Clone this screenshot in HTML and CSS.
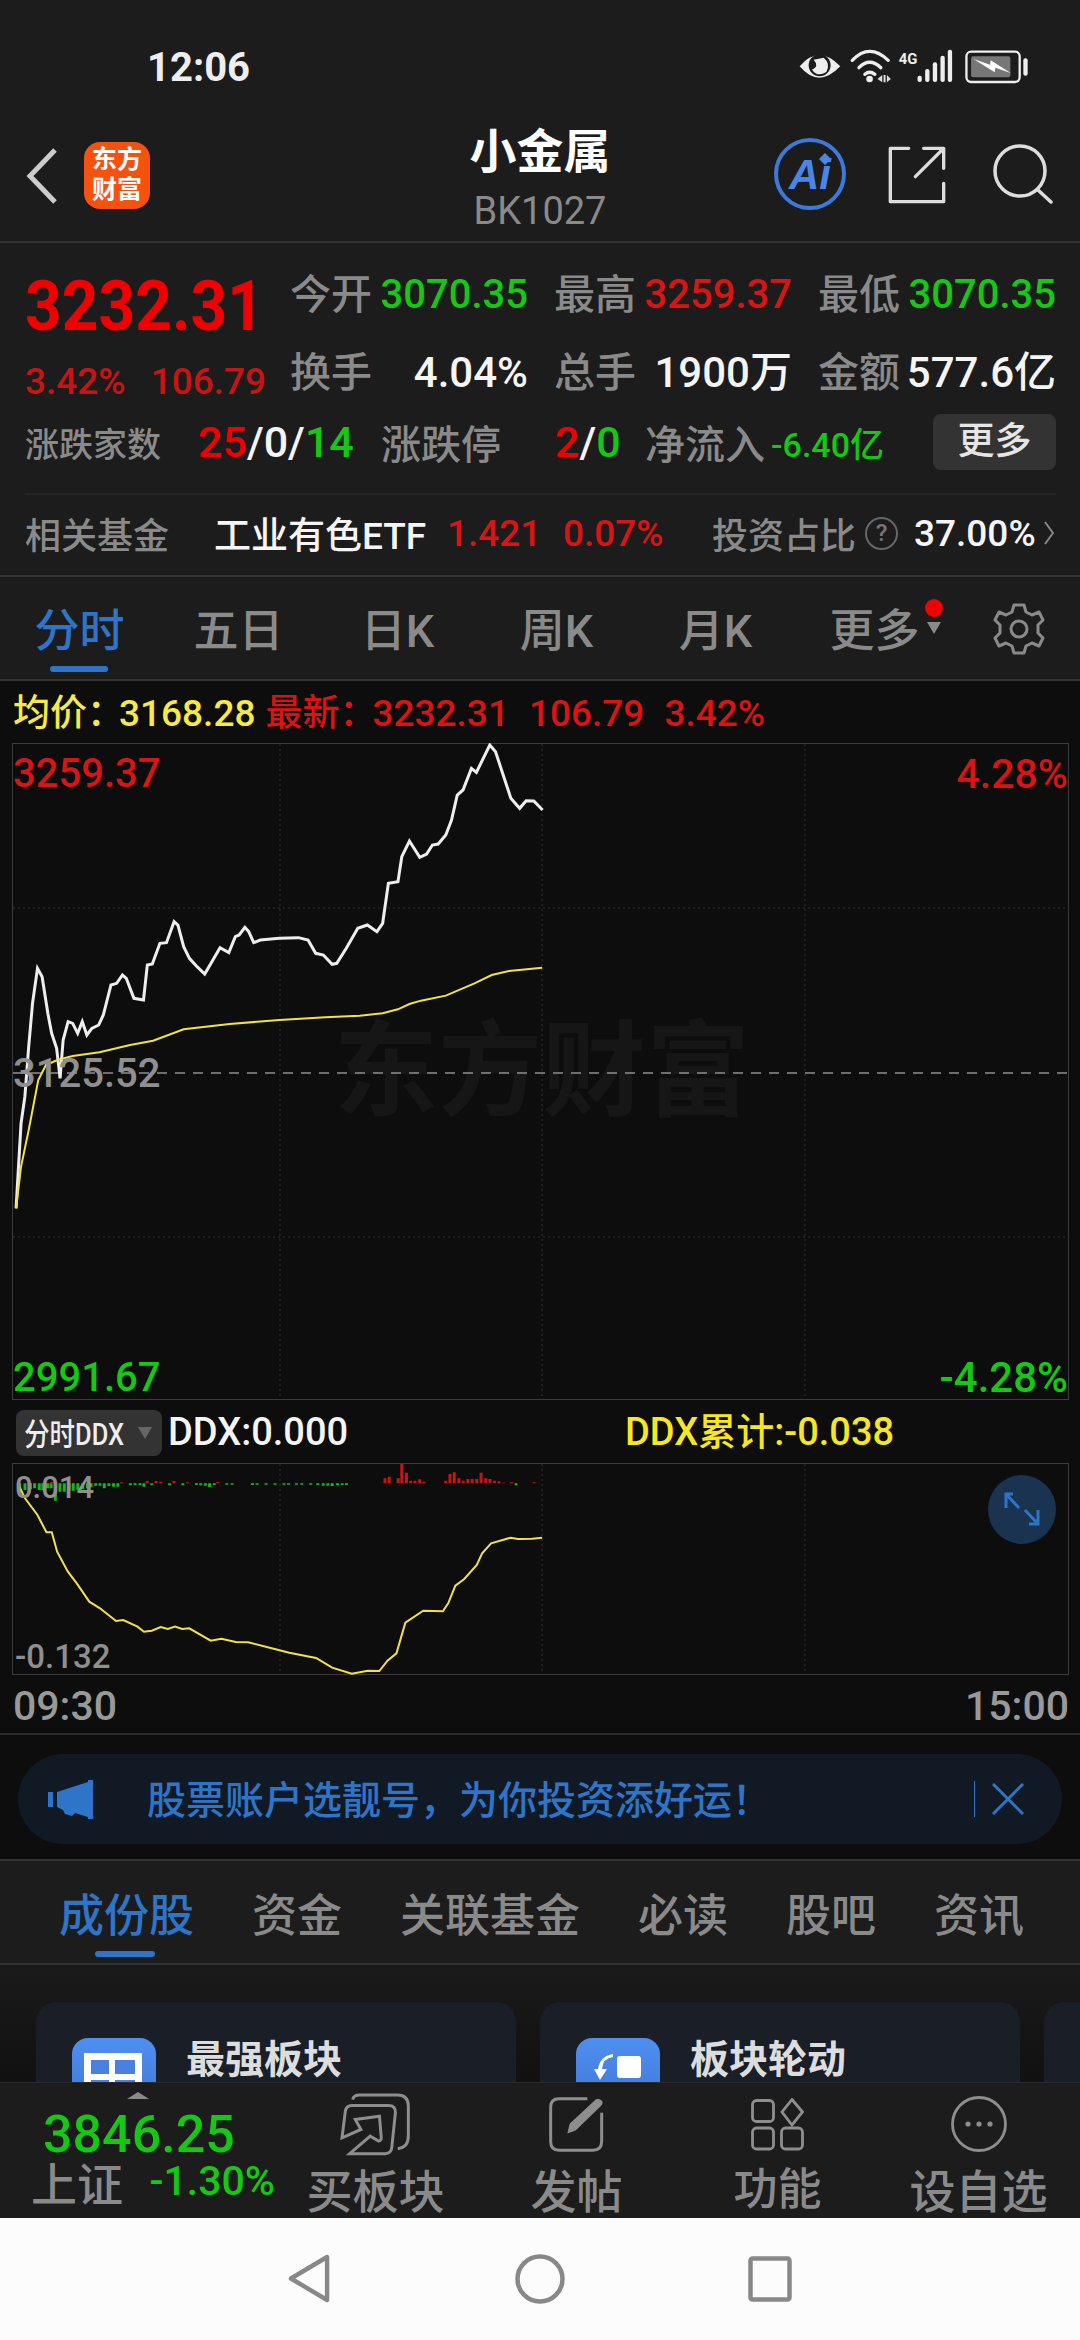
FILE: index.html
```html
<!DOCTYPE html>
<html lang="zh-CN">
<head>
<meta charset="UTF-8">
<meta name="viewport" content="width=device-width, initial-scale=1.0">
<title>小金属</title>
<link rel="stylesheet" href="styles.css">
</head>
<body>

<div class="status-bar">
    <span class="clock">12:06</span>
    <svg class="status-icons" viewBox="110 50 700 120">
        <path d="M118 108 Q175 40 240 108 Q175 176 118 108 Z" fill="#eee"/>
        <circle cx="178" cy="105" r="33" fill="#1c1c1c"/>
        <path d="M160 88 Q178 108 155 118 Q172 142 198 125 Q212 100 190 82 Z" fill="#eee"/>
        <path d="M276 90 Q328 36 384 90 M296 112 Q328 80 362 112 M314 132 Q328 120 344 132" fill="none" stroke="#eee" stroke-width="10" stroke-linecap="round"/>
        <circle cx="328" cy="146" r="10" fill="#eee"/>
        <path d="M352 146 L366 134 V156 Z M380 134 L392 146 L380 156 Z M370 134 H376 V156 H370 Z" fill="#ddd"/>
        <text x="416" y="100" font-size="46" font-weight="700" fill="#eee" textLength="56" lengthAdjust="spacingAndGlyphs">4G</text>
        <rect x="472" y="136" width="13" height="19" rx="6" fill="#eee"/>
        <rect x="495" y="116" width="13" height="39" rx="6" fill="#eee"/>
        <rect x="518" y="96" width="13" height="59" rx="6" fill="#eee"/>
        <rect x="541" y="76" width="13" height="79" rx="6" fill="#eee"/>
        <rect x="563" y="58" width="13" height="97" rx="6" fill="#eee"/>
        <rect x="619" y="64" width="160" height="91" rx="14" fill="none" stroke="#eee" stroke-width="7"/>
        <rect x="633" y="78" width="118" height="63" rx="6" fill="#777"/>
        <path d="M640 86 L690 103 L692 90 L752 128 L706 112 L704 126 Z" fill="#fff"/>
        <rect x="790" y="84" width="13" height="52" rx="6" fill="#eee"/>
    </svg>
</div>

<div class="header">
    <div class="header-left">
        <svg class="back-icon" viewBox="0 0 32 56"><path d="M29 2 L4 28 L29 54" fill="none" stroke="#ccc" stroke-width="5"/></svg>
        <div class="logo">东方<br>财富</div>
    </div>
    <div class="title-box">
        <div class="title">小金属</div>
        <div class="code">BK1027</div>
    </div>
    <div class="header-right">
        <div class="ai-btn">Ai<svg class="ai-star" viewBox="0 0 12 12"><path d="M6 0 L12 6 L6 12 L0 6 Z" fill="#4a86e8"/></svg></div>
        <svg class="share-icon" viewBox="380 345 180 180"><path d="M445 355 H390 V515 H550 V460 M465 440 L548 357 M490 355 H550 V415" fill="none" stroke="#ddd" stroke-width="10" stroke-linejoin="round" stroke-linecap="round"/></svg>
        <svg class="search-icon" viewBox="0 0 60 60"><circle cx="27" cy="27" r="25" fill="none" stroke="#ddd" stroke-width="3.5"/><path d="M45 46 L58 58" stroke="#ddd" stroke-width="3.5" stroke-linecap="round"/></svg>
    </div>
</div>

<div class="quote">
    <div class="quote-top">
        <div class="price-col">
            <div class="price">3232.31</div>
            <div class="change"><span>3.42%</span><span>106.79</span></div>
        </div>
        <div class="stats">
            <div class="stat"><span class="label">今开</span><span class="green">3070.35</span></div>
            <div class="stat"><span class="label">最高</span><span class="red">3259.37</span></div>
            <div class="stat"><span class="label">最低</span><span class="green">3070.35</span></div>
            <div class="stat"><span class="label">换手</span><span class="white big">4.04%</span></div>
            <div class="stat"><span class="label">总手</span><span class="white big">1900万</span></div>
            <div class="stat"><span class="label">金额</span><span class="white big">577.6亿</span></div>
        </div>
    </div>
    <div class="quote-row3">
        <span class="label small w-rise">涨跌家数</span>
        <span class="w-count"><span class="bright-red">25</span><span class="white">/0/</span><span class="green">14</span></span>
        <span class="label w-limit">涨跌停</span>
        <span class="w-limit-val"><span class="bright-red">2</span><span class="white">/</span><span class="green">0</span></span>
        <span class="label w-flow">净流入</span>
        <span class="green flow-val">-6.40亿</span>
        <span class="more-btn">更多</span>
    </div>
    <div class="quote-row4">
        <span class="label w-fund">相关基金</span>
        <span class="white w-etf">工业有色ETF</span>
        <span class="red w-nav">1.421</span>
        <span class="red w-pct">0.07%</span>
        <span class="label w-ratio">投资占比</span>
        <span class="help">?</span>
        <span class="white">37.00%</span>
        <svg class="row-arrow" viewBox="0 0 10 24"><path d="M1 1 L9 12 L1 23" fill="none" stroke="#888" stroke-width="2"/></svg>
    </div>
</div>

<div class="period-tabs">
    <div class="period active">分时<i class="period-line"></i></div>
    <div class="period">五日</div>
    <div class="period">日K</div>
    <div class="period">周K</div>
    <div class="period">月K</div>
    <div class="period">更多<i class="red-dot"></i><i class="more-arrow"></i></div>
    <svg class="gear" viewBox="0 0 52 52">
        <path d="M21 2 H31 L33 9 L39 12 L46 9 L50 17 L45 22 V30 L50 35 L46 43 L39 40 L33 43 L31 50 H21 L19 43 L13 40 L6 43 L2 35 L7 30 V22 L2 17 L6 9 L13 12 L19 9 Z" fill="none" stroke="#8a8a8a" stroke-width="3" stroke-linejoin="round"/>
        <circle cx="26" cy="26" r="8" fill="none" stroke="#8a8a8a" stroke-width="3"/>
    </svg>
</div>

<div class="dark-area">
    <div class="info-row">
        <span class="yellow">均价：</span><span class="yellow v-avg">3168.28</span>
        <span class="info-red">最新：</span><span class="info-red v-new">3232.31</span>
        <span class="info-red v-diff">106.79</span><span class="info-red v-pct">3.42%</span>
    </div>

    <div class="chart">
        <div class="watermark">东方财富</div>
        <svg class="chart-svg" viewBox="0 743 1080 657">
            <rect x="12.5" y="743.5" width="1056" height="656" fill="none" stroke="#3c3c3c"/>
            <path d="M280 744 V1400 M542 744 V1400 M805 744 V1400 M13 908 H1068 M13 1237 H1068" stroke="#333" stroke-dasharray="2 3"/>
            <path d="M13 1073 H1068" stroke="#8f8f8f" stroke-width="1.5" stroke-dasharray="10 8"/>
            <g transform="translate(0,720) scale(.38265,.33333)">
                <polyline class="line-white" points="42,1465 55,1210 65,1130 75,980 85,850 98,745 110,770 125,880 135,940 148,985 157,1075 165,960 178,905 190,910 203,940 215,905 227,945 240,925 258,915 270,885 290,795 305,790 320,765 330,775 350,835 375,840 385,735 398,732 418,670 435,668 455,605 465,615 480,680 495,715 515,740 535,762 575,683 598,698 615,650 625,645 640,622 650,635 663,668 680,660 730,655 780,653 805,660 825,700 845,705 868,733 880,730 905,685 935,625 960,615 985,635 1000,610 1015,490 1040,485 1050,410 1070,363 1097,412 1115,402 1130,375 1145,372 1165,345 1180,300 1195,225 1210,210 1232,145 1245,157 1280,75 1295,95 1315,165 1335,235 1358,265 1375,242 1395,243 1418,270"/>
                <polyline class="line-yellow" points="42,1465 55,1340 75,1230 100,1080 120,1035 150,1020 190,1008 260,997 340,975 400,962 480,928 600,912 730,900 850,892 940,887 1000,880 1040,868 1070,852 1100,842 1165,827 1240,790 1285,765 1330,753 1417,743"/>
            </g>
        </svg>
        <span class="chart-label top-left red">3259.37</span>
        <span class="chart-label top-right red">4.28%</span>
        <span class="chart-label mid-left">3125.52</span>
        <span class="chart-label bottom-left green">2991.67</span>
        <span class="chart-label bottom-right green">-4.28%</span>
    </div>

    <div class="ddx-row">
        <div class="ddx-chip"><span class="ddx-chip-text">分时DDX</span><i class="chip-arrow"></i></div>
        <span class="white ddx-val">DDX:0.000</span>
        <span class="ddx-total">DDX累计:-0.038</span>
    </div>

    <div class="sub-chart">
        <svg class="sub-svg" viewBox="0 1463 1080 212">
            <rect x="12.5" y="1463.5" width="1056" height="211" fill="none" stroke="#3c3c3c"/>
            <path d="M280 1464 V1674 M542 1464 V1674 M805 1464 V1674" stroke="#333" stroke-dasharray="2 3"/>
            <g transform="translate(0,1440) scale(.35714,.33333)">
                <path class="bars-green" d="M55 130V160M70 130V150M85 130V148M97 130V145M110 130V150M120 130V150M133 130V145M143 130V145M155 130V182M168 130V155M180 130V155M193 130V152M205 130V152M218 130V150M232 130V148M245 130V145M255 130V142M268 130V137M280 130V137M292 130V145M305 130V138M318 130V140M330 130V140M365 130V136M378 130V135M392 130V136M403 130V140M425 130V135M475 130V136M512 130V136M550 130V135M562 130V136M575 130V137M587 130V141M600 130V135M635 130V134M650 130V134M707 130V135M720 130V134M745 130V134M770 130V134M795 130V134M808 130V134M830 130V134M845 130V134M870 130V134M890 130V135M905 130V137M918 130V137M930 130V138M945 130V136M958 130V135M970 130V135M1445 130V136"/>
                <path class="bars-red" d="M145 130V126M340 130V127M412 130V123M437 130V123M450 130V125M487 130V123M525 130V127M610 130V126M1078 130V115M1090 130V110M1115 130V115M1125 130V72M1138 130V98M1150 130V122M1162 130V122M1175 130V118M1187 130V125M1248 130V122M1260 130V102M1272 130V97M1285 130V115M1297 130V122M1310 130V117M1322 130V117M1335 130V117M1347 130V98M1360 130V115M1372 130V117M1385 130V122M1397 130V124M1410 130V128M1432 130V127M1495 130V127"/>
                <polyline class="line-ddx" points="50,130 70,175 105,225 130,277 145,277 160,335 190,395 215,430 250,485 280,505 325,543 345,540 385,560 403,575 425,572 450,561 470,567 490,560 510,567 530,565 590,602 620,596 660,606 695,607 780,630 810,638 885,654 930,683 985,701 1030,692 1062,693 1085,662 1110,640 1135,548 1185,512 1240,514 1255,490 1275,437 1300,417 1335,375 1350,340 1375,310 1430,293 1450,297 1490,296 1518,293"/>
            </g>
        </svg>
        <span class="sub-label sub-top">0.014</span>
        <span class="sub-label sub-bottom">-0.132</span>
        <div class="expand-btn">
            <svg viewBox="0 0 36 36"><path d="M2 17 V3 H9 M2 3 L15 17 M34 19 V33 H25 M34 33 L21 19" fill="none" stroke="#2e74c8" stroke-width="3"/></svg>
        </div>
    </div>

    <div class="time-row"><span>09:30</span><span>15:00</span></div>

    <div class="banner-wrap">
        <div class="banner">
            <svg class="horn" viewBox="48 1779 45 39"><path d="M48 1791 H53 V1806 H48 Z M57 1791 L88 1781 V1779 H93 V1818 H88 V1816 L75 1812 L72 1815 L65 1813 L63 1809 L57 1806 Z" fill="#2e74c8"/></svg>
            <span class="banner-text">股票账户选靓号，为你投资添好运！</span>
            <i class="banner-sep"></i>
            <svg class="banner-close" viewBox="0 0 32 32"><path d="M1 1 L31 31 M31 1 L1 31" stroke="#2e74c8" stroke-width="3"/></svg>
        </div>
    </div>
</div>

<div class="content-tabs">
    <div class="content-tab active">成份股<i class="content-line"></i></div>
    <div class="content-tab">资金</div>
    <div class="content-tab">关联基金</div>
    <div class="content-tab">必读</div>
    <div class="content-tab">股吧</div>
    <div class="content-tab">资讯</div>
</div>

<div class="cards">
    <div class="card">
        <div class="card-icon">
            <svg viewBox="0 0 84 60"><path d="M12 15 H70 V60 H12 Z" fill="#fff"/><path d="M19 22 H37 V36 H19 Z M43 22 H63 V36 H43 Z M19 42 H37 V60 H19 Z M43 42 H63 V60 H43 Z" fill="#4a80e0"/></svg>
        </div>
        <div class="card-title">最强板块</div>
    </div>
    <div class="card">
        <div class="card-icon">
            <svg viewBox="0 0 84 60"><rect x="41" y="18" width="24" height="22" rx="3" fill="#fff"/><path d="M37 19 Q27 20 26 31 H31 L24 42 L18 31 H22 Q24 18 37 16 Z" fill="#fff"/></svg>
        </div>
        <div class="card-title">板块轮动</div>
    </div>
    <div class="card"></div>
</div>

<div class="bottom-bar">
    <div class="index-box">
        <i class="index-arrow"></i>
        <div class="index-val">3846.25</div>
        <div class="index-row"><span class="index-name">上证</span><span class="index-pct">-1.30%</span></div>
    </div>
    <div class="bar-item">
        <div class="bar-icon">
            <svg class="ic-buy" viewBox="60 20 215 190"><path d="M97 40 Q100 26 118 26 H232 Q265 26 265 60 V150 Q265 185 233 188 M65 155 L75 75 Q78 58 95 58 H205 Q228 58 226 80 L215 185 Q213 203 195 203 H88 L150 150 L175 165 Q185 165 183 150 L178 90 L105 100 L122 130 Z" fill="none" stroke="#8e8e8e" stroke-width="9"/></svg>
        </div>
        <div class="bar-text">买板块</div>
    </div>
    <div class="bar-item">
        <div class="bar-icon">
            <svg class="ic-post" viewBox="690 28 165 164"><path d="M805 33 H720 Q695 33 695 58 V160 Q695 187 720 187 H822 Q848 187 848 160 V75" fill="none" stroke="#8e8e8e" stroke-width="9"/><path d="M745 137 L752 108 L830 35 Q840 28 850 40 Q853 48 845 55 L770 128 Z" fill="#8e8e8e"/></svg>
        </div>
        <div class="bar-text">发帖</div>
    </div>
    <div class="bar-item">
        <div class="bar-icon">
            <svg class="ic-func" viewBox="0 0 53 53"><path d="M41 1.5 L51.5 14 L41 27 L31 14 Z" fill="none" stroke="#8e8e8e" stroke-width="2.8"/><rect x="1.5" y="2.5" width="21" height="21" rx="4" fill="none" stroke="#8e8e8e" stroke-width="2.8"/><rect x="1.5" y="30" width="21" height="21" rx="4" fill="none" stroke="#8e8e8e" stroke-width="2.8"/><rect x="30.5" y="30" width="21" height="21" rx="4" fill="none" stroke="#8e8e8e" stroke-width="2.8"/></svg>
        </div>
        <div class="bar-text tight">功能</div>
    </div>
    <div class="bar-item">
        <div class="bar-icon">
            <svg class="ic-opt" viewBox="0 0 56 56"><circle cx="28" cy="28" r="26.5" fill="none" stroke="#8e8e8e" stroke-width="2.8"/><circle cx="17" cy="28" r="2.6" fill="#8e8e8e"/><circle cx="28" cy="28" r="2.6" fill="#8e8e8e"/><circle cx="39" cy="28" r="2.6" fill="#8e8e8e"/></svg>
        </div>
        <div class="bar-text">设自选</div>
    </div>
</div>

<div class="nav-bar">
    <svg class="nav-back" viewBox="0 0 44 50"><path d="M40 3 V47 L3 25 Z" fill="none" stroke="#888" stroke-width="4.5" stroke-linejoin="round"/></svg>
    <svg class="nav-home" viewBox="0 0 50 50"><circle cx="25" cy="25" r="22.5" fill="none" stroke="#888" stroke-width="4.5"/></svg>
    <svg class="nav-recent" viewBox="0 0 44 46"><rect x="2.5" y="2.5" width="39" height="41" rx="2" fill="none" stroke="#888" stroke-width="4.5"/></svg>
</div>

</body>
</html>
```

FILE: styles.css
```css
* {
    box-sizing: border-box;
}

body {
    margin: 0;
    width: 1080px;
    height: 2340px;
    overflow: hidden;
    background-color: #1c1c1c;
    font-family: Roboto, "Noto Sans CJK SC", sans-serif;
    font-weight: 500;
    color: #8a8a8a;
}

i {
    display: block;
}

svg {
    display: block;
}

.red { color: #d81414; }
.bright-red { color: #f00000; }
.green { color: #14c814; }
.white { color: #f5f5f5; }
.yellow { color: #f7ea45; }
.info-red { color: #d81414; }

/* status bar */
.status-bar {
    height: 130px;
    padding: 48px 50px 0 147px;
    display: flex;
    justify-content: space-between;
    align-items: flex-start;
}

.clock {
    font-size: 40px;
    font-weight: 700;
    line-height: 40px;
    color: #eee;
}

.status-icons {
    width: 233px;
    height: 40px;
    margin-top: -1px;
}

/* header */
.header {
    height: 113px;
    display: grid;
    grid-template-columns: 1fr auto 1fr;
    border-bottom: 2px solid #333;
}

.header-left {
    display: flex;
    align-items: flex-start;
    padding: 18px 0 0 26px;
    gap: 26px;
}

.back-icon {
    width: 32px;
    height: 56px;
}

.logo {
    width: 66px;
    height: 67px;
    margin-top: -6px;
    padding-top: 3px;
    border-radius: 16px;
    background-color: #f5520f;
    color: #fff;
    font-size: 25px;
    font-weight: 700;
    line-height: 30px;
    text-align: center;
}

.title-box {
    text-align: center;
}

.title {
    font-size: 47px;
    font-weight: 700;
    line-height: 44px;
    color: #fff;
}

.code {
    margin-top: 19px;
    font-size: 38px;
    font-weight: 400;
    line-height: 36px;
    color: #8a8a8a;
}

.header-right {
    display: flex;
    justify-content: flex-end;
    align-items: flex-start;
    padding: 8px 27px 0 0;
}

.ai-btn {
    position: relative;
    width: 72px;
    height: 72px;
    border: 4px solid #3d79d8;
    border-radius: 50%;
    color: #4a86e8;
    font-family: "Liberation Sans", sans-serif;
    font-size: 42px;
    font-weight: 700;
    font-style: italic;
    line-height: 66px;
    text-align: center;
}

.ai-star {
    position: absolute;
    top: 11px;
    right: 11px;
    width: 12px;
    height: 12px;
}

.share-icon {
    width: 60px;
    height: 60px;
    margin: 7px 0 0 41px;
}

.search-icon {
    width: 60px;
    height: 60px;
    margin: 6px 0 0 46px;
}

/* quote block */
.quote {
    height: 334px;
    padding: 0 24px 0 25px;
    border-bottom: 2px solid #333;
    font-size: 40px;
}

.quote-top {
    display: flex;
}

.price-col {
    width: 265px;
    padding-top: 29px;
}

.price {
    font-size: 64px;
    font-weight: 700;
    line-height: 70px;
    color: #f00000;
    transform: scaleY(1.1);
}

.change {
    display: flex;
    gap: 25px;
    margin-top: 18px;
    font-size: 37px;
    line-height: 44px;
    color: #c81414;
}

.stats {
    display: grid;
    grid-template-columns: repeat(3, 238px);
    column-gap: 26px;
    row-gap: 22px;
    padding-top: 27px;
}

.stat {
    display: flex;
    justify-content: space-between;
    line-height: 50px;
}

.big {
    font-size: 42px;
}

.label {
    color: #8a8a8a;
    font-size: 41px;
}

.label.small {
    font-size: 34px;
}

.quote-row3 {
    display: flex;
    align-items: center;
    height: 56px;
    margin-top: 10px;
    font-size: 43px;
}

.quote-row3 .label:not(.small) {
    font-size: 40px;
}

.w-rise { width: 173px; }
.w-count { width: 183px; }
.w-limit { width: 174px; }
.w-limit-val { width: 90px; }
.w-flow { width: 126px; }

.flow-val {
    font-size: 34px;
}

.more-btn {
    margin-left: auto;
    width: 123px;
    height: 56px;
    border-radius: 8px;
    background-color: #333;
    color: #e6e6e6;
    font-size: 37px;
    line-height: 56px;
    text-align: center;
}

.quote-row4 {
    display: flex;
    align-items: center;
    height: 84px;
    margin-top: 23px;
    padding-bottom: 6px;
    border-top: 2px solid #242424;
    font-size: 37px;
}

.quote-row4 .label {
    font-size: 36px;
}

.w-fund { width: 189px; }
.w-etf { width: 233px; }
.w-nav { width: 116px; }
.w-pct { width: 149px; }
.w-ratio { width: 153px; }

.help {
    width: 33px;
    height: 33px;
    margin-right: 16px;
    border: 2px solid #666;
    border-radius: 50%;
    color: #777;
    font-size: 24px;
    line-height: 29px;
    text-align: center;
}

.row-arrow {
    width: 10px;
    height: 24px;
    margin-left: 8px;
}

/* period tabs */
.period-tabs {
    position: relative;
    height: 104px;
    display: grid;
    grid-template-columns: repeat(6, 159px) 1fr;
    border-bottom: 2px solid #333;
}

.period {
    position: relative;
    padding-top: 28px;
    font-size: 45px;
    line-height: 54px;
    text-align: center;
}

.period.active {
    color: #2e74c8;
}

.period-line {
    position: absolute;
    left: 50px;
    top: 89px;
    width: 58px;
    height: 6px;
    border-radius: 3px;
    background-color: #2e74c8;
}

.red-dot {
    position: absolute;
    top: 22px;
    left: 130px;
    width: 18px;
    height: 18px;
    border-radius: 50%;
    background-color: #f00000;
}

.more-arrow {
    position: absolute;
    top: 45px;
    left: 132px;
    border-left: 7px solid transparent;
    border-right: 7px solid transparent;
    border-top: 12px solid #8a8a8a;
}

.gear {
    width: 52px;
    height: 52px;
    margin: 26px 0 0 39px;
}

/* dark middle part */
.dark-area {
    height: 1180px;
    background-color: #0d0d0d;
}

.info-row {
    display: flex;
    height: 62px;
    padding-left: 13px;
    font-size: 37px;
    line-height: 66px;
}

.v-avg { margin-left: -5px; }
.v-new { margin-left: -4px; }
.v-avg + .info-red { margin-left: 10px; }
.v-diff { margin-left: 20px; }
.v-pct { margin-left: 20px; }

.chart {
    position: relative;
    height: 657px;
}

.chart-svg {
    position: absolute;
    left: 0;
    top: 0;
    width: 1080px;
    height: 657px;
}

.line-white {
    fill: none;
    stroke: #eee;
    stroke-width: 3px;
    vector-effect: non-scaling-stroke;
}

.line-yellow,
.line-ddx {
    fill: none;
    stroke: #f2e24a;
    stroke-width: 2px;
    vector-effect: non-scaling-stroke;
}

.bars-green {
    stroke: #14b814;
    stroke-width: 3px;
    vector-effect: non-scaling-stroke;
}

.bars-red {
    stroke: #c81414;
    stroke-width: 3px;
    vector-effect: non-scaling-stroke;
}

.watermark {
    position: absolute;
    left: 334px;
    top: 280px;
    font-size: 104px;
    font-weight: 700;
    line-height: 100px;
    color: #161616;
}

.chart-label {
    position: absolute;
    font-size: 40px;
    line-height: 44px;
}

.top-left { left: 13px; top: 9px; }
.top-right { right: 12px; top: 9px; font-size: 41px; }
.mid-left { left: 13px; top: 309px; color: #8f8f8f; }
.bottom-left { left: 13px; top: 613px; }
.bottom-right { right: 12px; top: 613px; font-size: 42px; }

.ddx-row {
    display: flex;
    align-items: center;
    height: 63px;
    padding-left: 16px;
    font-size: 38px;
}

.ddx-chip {
    position: relative;
    width: 146px;
    height: 46px;
    margin: 2px 6px 0 0;
    border-radius: 8px;
    background-color: #333;
    color: #eee;
}

.ddx-chip-text {
    display: inline-block;
    font-size: 31px;
    line-height: 46px;
    padding-left: 10px;
    transform: scaleX(.82);
    transform-origin: left center;
    white-space: nowrap;
}

.chip-arrow {
    position: absolute;
    left: 122px;
    top: 17px;
    border-left: 7px solid transparent;
    border-right: 7px solid transparent;
    border-top: 12px solid #666;
}

.ddx-val {
    width: 457px;
    line-height: 60px;
}

.ddx-total {
    font-size: 38px;
    line-height: 60px;
    color: #f6e71f;
}

.sub-chart {
    position: relative;
    height: 212px;
}

.sub-svg {
    position: absolute;
    left: 0;
    top: 0;
    width: 1080px;
    height: 212px;
}

.sub-label {
    position: absolute;
    left: 15px;
    font-size: 33px;
    line-height: 36px;
    color: #8f8f8f;
}

.sub-top { top: 7px; font-size: 31px; }
.sub-bottom { top: 176px; }

.expand-btn {
    position: absolute;
    left: 988px;
    top: 12px;
    width: 68px;
    height: 69px;
    padding: 16px;
    border-radius: 50%;
    background-color: #1a3350;
}

.time-row {
    display: flex;
    justify-content: space-between;
    height: 60px;
    padding: 0 11px 0 13px;
    border-bottom: 2px solid #2a2a2a;
    font-size: 41px;
    line-height: 62px;
    color: #999;
}

.banner-wrap {
    height: 126px;
    padding: 19px 18px 0;
    border-bottom: 2px solid #333;
}

.banner {
    display: flex;
    align-items: center;
    height: 90px;
    padding: 0 38px 0 30px;
    border-radius: 45px;
    background-color: #111a24;
}

.horn {
    width: 45px;
    height: 39px;
}

.banner-text {
    margin: 0 0 5px 54px;
    font-size: 39px;
    color: #2e74c8;
}

.banner-sep {
    width: 1px;
    height: 36px;
    margin-left: auto;
    background-color: #2e74c8;
}

.banner-close {
    width: 32px;
    height: 32px;
    margin-left: 17px;
}

/* content tabs */
.content-tabs {
    height: 104px;
    display: flex;
    gap: 58px;
    padding-left: 59px;
    border-bottom: 2px solid #333;
}

.content-tab {
    position: relative;
    padding-top: 29px;
    font-size: 45px;
    line-height: 54px;
}

.content-tab.active {
    color: #2e74c8;
}

.content-line {
    position: absolute;
    left: 36px;
    top: 90px;
    width: 60px;
    height: 6px;
    border-radius: 3px;
    background-color: #2e74c8;
}

/* cards under the bar */
.cards {
    height: 117px;
    display: flex;
    gap: 24px;
    padding: 37px 0 0 36px;
    overflow: hidden;
    background: linear-gradient(#1a1a1a, #111);
}

.card {
    flex: 0 0 480px;
    height: 200px;
    display: flex;
    gap: 30px;
    padding: 36px;
    border-radius: 20px;
    background-color: #1a1e27;
}

.card-icon {
    width: 84px;
    height: 84px;
    border-radius: 16px;
    background: linear-gradient(#4f8ef0, #3f74d0);
}

.card-title {
    margin-top: 2px;
    font-size: 39px;
    font-weight: 700;
    line-height: 40px;
    color: #ddd;
}

/* bottom bar */
.bottom-bar {
    height: 136px;
    display: flex;
    background-color: #1c1c1c;
    border-top: 1px solid #2a2a2a;
}

.index-box {
    position: relative;
    width: 275px;
    padding-top: 9px;
}

.index-arrow {
    width: 0;
    margin-left: 127px;
    border-left: 11px solid transparent;
    border-right: 11px solid transparent;
    border-bottom: 7px solid #8a8a8a;
}

.index-val {
    margin: 10px 0 0 43px;
    font-size: 52px;
    font-weight: 500;
    line-height: 52px;
    color: #14c814;
}

.index-row {
    display: flex;
    align-items: center;
    height: 40px;
    padding-left: 31px;
}

.index-name {
    width: 124px;
    font-size: 46px;
}

.index-pct {
    font-size: 41px;
    color: #14c814;
}

.bar-item {
    width: 201px;
    padding-top: 9px;
    text-align: center;
}

.bar-icon {
    display: flex;
    justify-content: center;
    align-items: center;
    height: 64px;
}

.ic-buy { width: 72px; height: 63px; }
.ic-post { width: 55px; height: 55px; }
.ic-func { width: 53px; height: 53px; }
.ic-opt { width: 56px; height: 56px; }

.bar-text {
    margin-top: 11px;
    font-size: 46px;
    line-height: 50px;
}

.bar-text.tight {
    margin-top: 9px;
    font-size: 44px;
}

/* android nav */
.nav-bar {
    height: 122px;
    position: relative;
    display: flex;
    align-items: flex-start;
    padding: 36px 0 0 288px;
    background-color: #fcfcfc;
}

.nav-back { width: 43px; height: 49px; }
.nav-home { width: 50px; height: 50px; margin-left: 184px; }
.nav-recent { width: 44px; height: 46px; margin: 2px 0 0 183px; }
```
